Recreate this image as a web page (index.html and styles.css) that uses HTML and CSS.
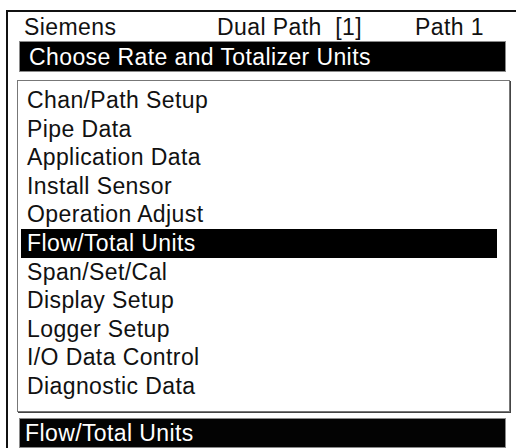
FILE: index.html
```html
<!DOCTYPE html>
<html lang="en">
<head>
    <meta charset="UTF-8">
    <title>Choose Rate and Totalizer Units</title>
    <link rel="stylesheet" href="styles.css">
</head>
<body>
    <div class="screen">
        <div class="status">
            <span>Siemens</span>
            <span>Dual Path&nbsp; [1]</span>
            <span>Path 1</span>
        </div>
        <div class="title">Choose Rate and Totalizer Units</div>
        <ul class="menu">
            <li>Chan/Path Setup</li>
            <li>Pipe Data</li>
            <li>Application Data</li>
            <li>Install Sensor</li>
            <li>Operation Adjust</li>
            <li class="selected">Flow/Total Units</li>
            <li>Span/Set/Cal</li>
            <li>Display Setup</li>
            <li>Logger Setup</li>
            <li>I/O Data Control</li>
            <li>Diagnostic Data</li>
        </ul>
        <div class="footer">Flow/Total Units</div>
    </div>
</body>
</html>
```

FILE: styles.css
```css
body {
    margin: 0;
    overflow: hidden;
    background: #fff;
    color: #111;
    font-family: "Liberation Sans", Arial, sans-serif;
    font-size: 23px;
    letter-spacing: 0.4px;
}
.screen {
    margin: 10px 0 0 6px;
    height: 440px;
    border-top: 2px solid #111;
    border-left: 2px solid #111;
}
.status {
    display: grid;
    grid-template-columns: 193px 198px auto;
    height: 29px;
    line-height: 30px;
    padding-left: 16px;
}
.title {
    box-sizing: border-box;
    width: 487px;
    height: 31px;
    margin-left: 11px;
    padding: 2px 0 0 9px;
    line-height: 27px;
    background: #000;
    color: #fff;
    border: 1px solid #8a8a8a;
}
.menu {
    box-sizing: border-box;
    list-style: none;
    width: 493px;
    height: 332px;
    margin: 8px 0 0 9px;
    padding: 5px 12px 0 3px;
    border: 1px solid #777;
    box-shadow: 1px 1px 0 #444;
}
.menu li {
    line-height: 28.6px;
    padding-left: 6px;
}
.menu li.selected {
    background: #000;
    color: #fff;
}
.footer {
    box-sizing: border-box;
    width: 487px;
    height: 30px;
    margin: 6px 0 0 11px;
    padding-left: 5px;
    line-height: 28px;
    background: #030303;
    color: #fff;
    border: 1px solid #8a8a8a;
}
```
